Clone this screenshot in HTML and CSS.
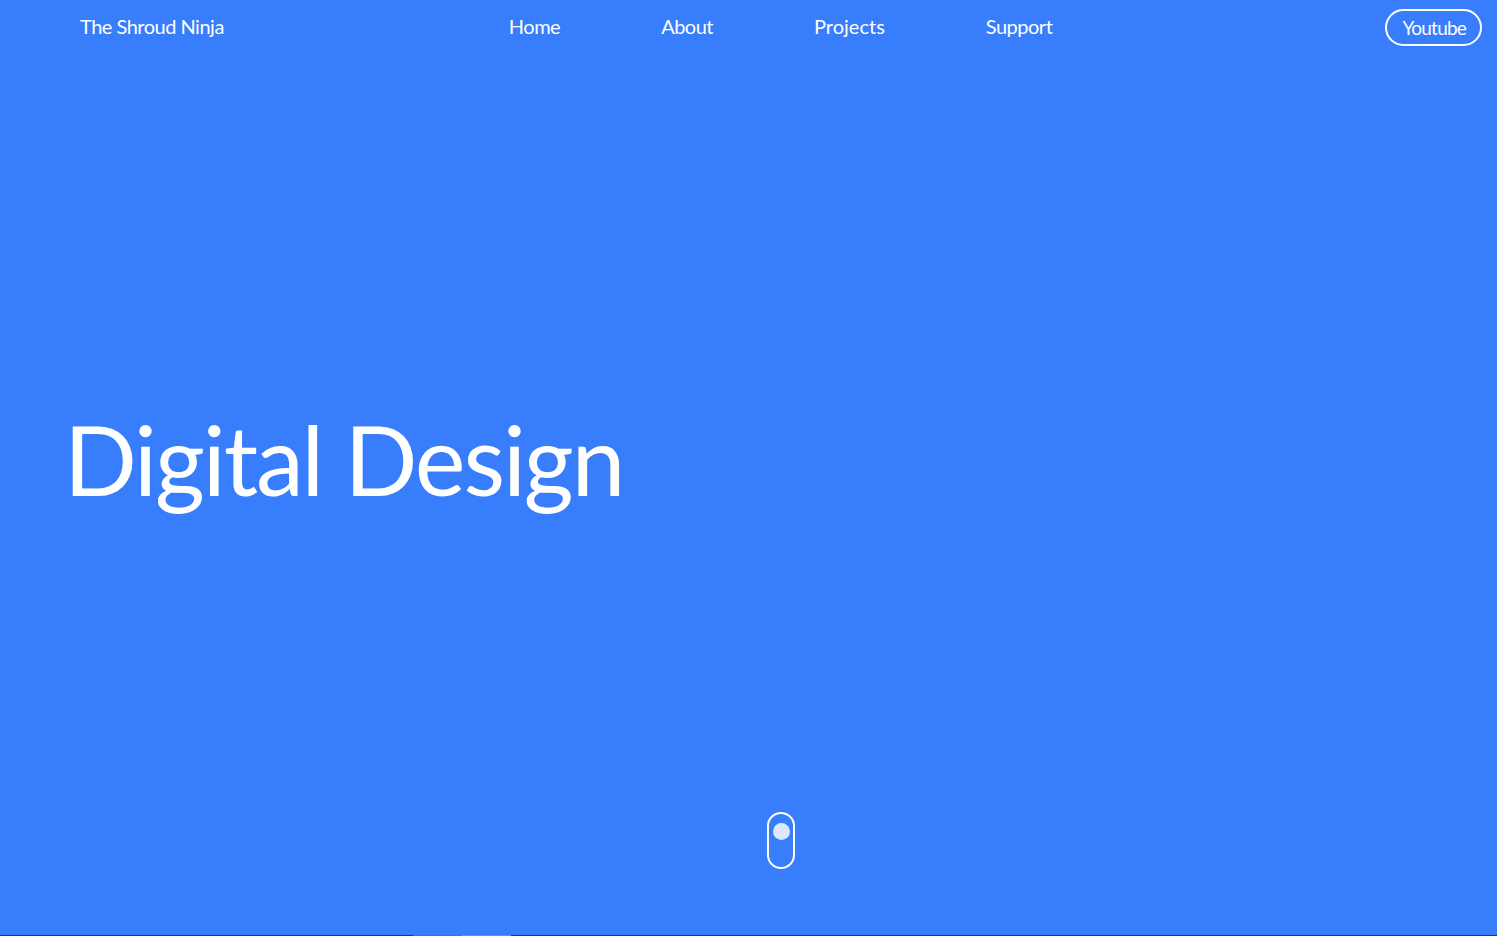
FILE: index.html
```html
<!DOCTYPE html>
<html lang="en">
<head>
<meta charset="utf-8">
<title>The Shroud Ninja</title>
<link rel="stylesheet" href="styles.css">
</head>
<body>
<div class="page">
  <header class="topbar">
    <a class="logo" href="#">The Shroud Ninja</a>
    <nav class="nav">
      <a href="#">Home</a>
      <a href="#">About</a>
      <a href="#">Projects</a>
      <a href="#">Support</a>
    </nav>
    <a class="yt" href="#">Youtube</a>
  </header>
  <section class="hero">
    <h1 class="title">Digital Design</h1>
    <div class="scroll"><span class="dot"></span></div>
  </section>
  <section class="next">
    <span class="bar gray"></span><span class="bar orange"></span>
  </section>
</div>
</body>
</html>
```
FILE: styles.css
```css
html, body { margin: 0; padding: 0; }
body {
  background: #377dfc;
  font-family: Lato, "Liberation Sans", sans-serif;
  color: #fff;
  overflow: hidden;
}
a { color: #fff; text-decoration: none; }
.page { display: flex; flex-direction: column; height: 936px; }
.topbar {
  height: 54px;
  display: flex;
  align-items: center;
  padding: 0 15px 2px 80px;
  box-sizing: border-box;
}
.logo { font-size: 20px; letter-spacing: -0.5px; }
.nav { display: flex; gap: 101px; margin-left: 285px; font-size: 20px; letter-spacing: -0.5px; }
.nav a:nth-child(3) { letter-spacing: 0; }
.yt {
  margin-left: auto;
  font-size: 19px;
  letter-spacing: -0.8px;
  border: 2px solid #fff;
  border-radius: 20px;
  height: 37px;
  box-sizing: border-box;
  padding: 0 14px 0 15px;
  margin-top: 2px;
  display: flex;
  align-items: center;
}
.hero {
  height: 881px;
  display: flex;
  flex-direction: column;
  padding-left: 64px;
  box-sizing: border-box;
  position: relative;
}
.title {
  margin: 357px 0 0 0;
  font-weight: 400;
  font-size: 96px;
  line-height: 1;
  letter-spacing: -2.1px;
}
.scroll {
  position: absolute;
  left: 767px;
  top: 758px;
  width: 28px;
  height: 57px;
  border: 2px solid #fff;
  border-radius: 14px;
  box-sizing: border-box;
}
.dot {
  position: absolute;
  left: 3.5px;
  top: 9px;
  width: 17px;
  height: 17px;
  border-radius: 50%;
  background: #dfe7fb;
}
.next { height: 1px; background: #1b3a5e; display: flex; padding-left: 413px; flex: none; }
.bar { height: 1px; width: 49px; }
.gray { background: #5d6f80; }
.orange { background: #c97a45; }
```
